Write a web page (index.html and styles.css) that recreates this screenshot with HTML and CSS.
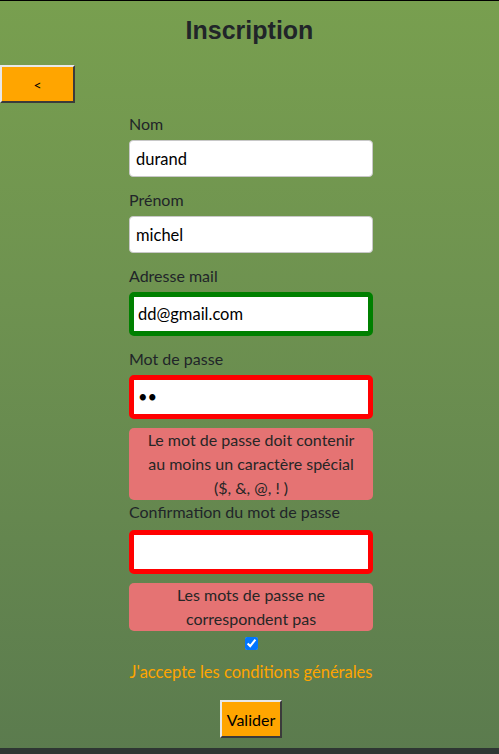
FILE: index.html
```html
<!DOCTYPE html>
<html lang="fr">
<head>
<meta charset="utf-8">
<title>Inscription</title>
<link rel="stylesheet" href="styles.css">
</head>
<body>
<div class="page">
  <h1 class="title">Inscription</h1>
  <button class="back" type="button">&lt;</button>
  <form class="form">
    <label class="label">Nom</label>
    <input class="field" type="text" value="durand">
    <label class="label">Prénom</label>
    <input class="field" type="text" value="michel">
    <label class="label">Adresse mail</label>
    <input class="field valid" type="email" value="dd@gmail.com">
    <label class="label">Mot de passe</label>
    <input class="field invalid" type="password" value="ab">
    <div class="error">Le mot de passe doit contenir au moins un caractère spécial ($, &amp;, @, ! )</div>
    <label class="label tight">Confirmation du mot de passe</label>
    <input class="field invalid" type="password" value="">
    <div class="error">Les mots de passe ne correspondent pas</div>
    <input class="check" type="checkbox" checked>
    <p class="terms">J'accepte les conditions générales</p>
    <button class="submit" type="button">Valider</button>
  </form>
</div>
<footer class="footer"><span class="footer-text">Véritas</span></footer>
</body>
</html>
```
FILE: styles.css
```css
html, body {
  margin: 0;
  padding: 0;
}
body {
  width: 499px;
  height: 754px;
  overflow: hidden;
  background: linear-gradient(to bottom, #789f4f 0%, #6e9250 40%, #5b7b4e 100%);
  font-family: "Lato", "Open Sans", sans-serif;
  border-top: 1px solid #000;
  box-sizing: border-box;
  display: flex;
  flex-direction: column;
}
.page {
  flex: 1;
  display: flex;
  flex-direction: column;
}
.title {
  margin: 12px 0 0;
  height: 34px;
  line-height: 34px;
  text-align: center;
  font-family: "Liberation Sans", Arial, sans-serif;
  font-weight: bold;
  font-size: 25px;
  color: #212529;
}
.back {
  margin: 18px 0 0 0;
  width: 75px;
  height: 38px;
  background: #ffa500;
  border: 2px outset #e8e8e8;
  border-right-color: #8f8f8f;
  border-bottom-color: #8f8f8f;
  font-family: "Lato", sans-serif;
  font-size: 14px;
  color: #000;
  padding: 0;
  align-self: flex-start;
}
.form {
  margin: -2px 0 0 129px;
  width: 244px;
  display: flex;
  flex-direction: column;
  align-items: stretch;
}
.label {
  display: block;
  font-size: 16px;
  line-height: 20px;
  color: #212529;
  margin: 13px 0 6px;
}
.label.tight {
  margin-top: 2px;
  margin-bottom: 8px;
}
.field {
  box-sizing: border-box;
  height: 37px;
  border: 1px solid #c8c8c8;
  border-radius: 4px;
  background: #fff;
  padding: 0 6px;
  font-family: "Lato", sans-serif;
  font-size: 16.5px;
  color: #000;
  outline: none;
}
.field.valid {
  height: 44px;
  border: 5px solid #008000;
  border-radius: 5px;
  padding: 0 4px;
}
.field.invalid {
  height: 44px;
  border: 5px solid #ff0000;
  border-radius: 5px;
  padding: 0 4px;
}
.error {
  margin-top: 9px;
  background: #e57373;
  border-radius: 5px;
  text-align: center;
  font-size: 16px;
  line-height: 24px;
  color: #262626;
  padding: 0 14px;
}
.check {
  align-self: center;
  margin: 6px 0 0;
  width: 13px;
  height: 13px;
}
.terms {
  margin: 12px 0 0;
  text-align: center;
  color: #ffa500;
  font-size: 16.5px;
  line-height: 20px;
  white-space: nowrap;
}
.submit {
  align-self: center;
  margin-top: 18px;
  height: 38px;
  padding: 0 5px;
  background: #ffa500;
  border: 2px outset #e8e8e8;
  border-right-color: #8f8f8f;
  border-bottom-color: #8f8f8f;
  font-family: "Lato", sans-serif;
  font-size: 16px;
  color: #000;
}
.footer {
  height: 6px;
  background: #2e3633;
  overflow: hidden;
  flex-shrink: 0;
  padding-left: 85px;
}
.footer-text {
  display: block;
  color: #fff;
  font-size: 16px;
  line-height: 16px;
  margin-top: 3px;
}
```
